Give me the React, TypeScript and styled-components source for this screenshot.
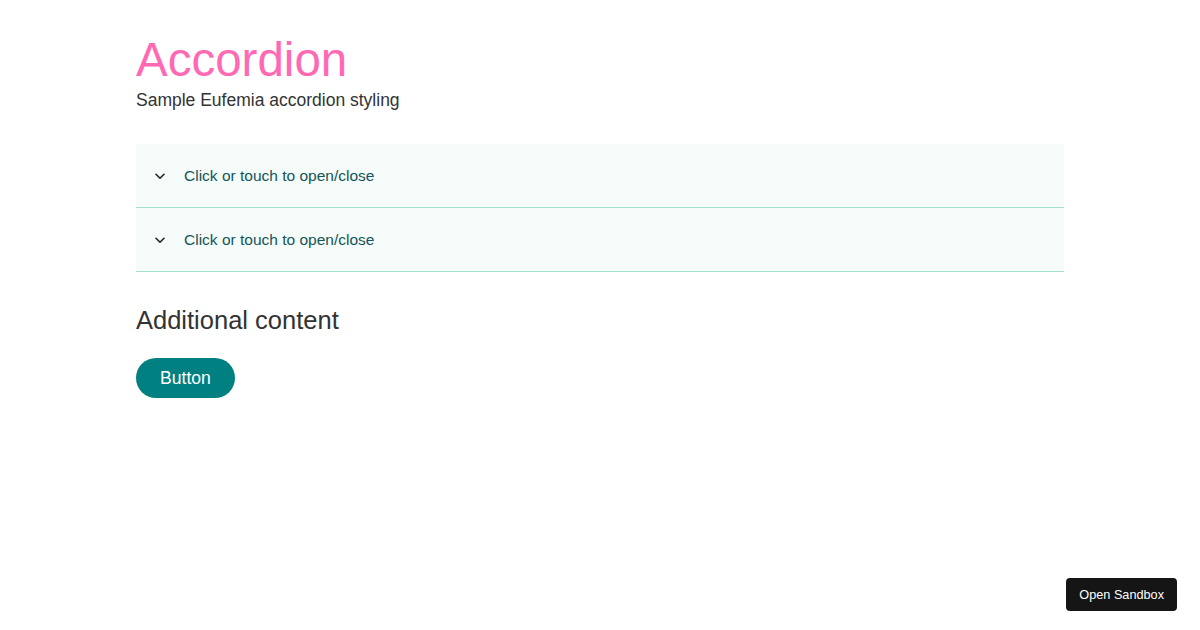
import styled, { createGlobalStyle } from 'styled-components';

const GlobalStyle = createGlobalStyle`
  html, body {
    margin: 0;
    padding: 0;
    background: #ffffff;
    font-family: 'Liberation Sans', Arial, Helvetica, sans-serif;
    color: #333333;
  }
`;

const ITEMS = ['Click or touch to open/close', 'Click or touch to open/close'];

function ChevronDown() {
  return (
    <svg width="16" height="16" viewBox="0 0 16 16" fill="none" aria-hidden="true">
      <path
        d="M4 6.25l4 4 4-4"
        stroke="#222"
        strokeWidth="1.6"
        strokeLinecap="round"
        strokeLinejoin="round"
      />
    </svg>
  );
}

export default function App(): JSX.Element {
  return (
    <>
      <GlobalStyle />
      <Page>
        <Title>Accordion</Title>
        <Lead>Sample Eufemia accordion styling</Lead>
        <AccordionGroup>
          {ITEMS.map((label, i) => (
            <AccordionHeader key={i} type="button">
              <IconWrap>
                <ChevronDown />
              </IconWrap>
              <HeaderLabel>{label}</HeaderLabel>
            </AccordionHeader>
          ))}
        </AccordionGroup>
        <SubHeading>Additional content</SubHeading>
        <PrimaryButton type="button">Button</PrimaryButton>
      </Page>
      <SandboxButton type="button">Open Sandbox</SandboxButton>
    </>
  );
}

const Page = styled.main`
  max-width: 928px;
  margin: 0 auto;
  padding-top: 32px;
  display: flex;
  flex-direction: column;
  align-items: flex-start;
`;

const Title = styled.h1`
  margin: 0;
  font-size: 47.5px;
  font-weight: 400;
  line-height: 56px;
  color: #ff69b4;
`;

const Lead = styled.p`
  margin: 0;
  font-size: 17.5px;
  line-height: 24px;
  color: #333333;
`;

const AccordionGroup = styled.div`
  width: 100%;
  margin-top: 32px;
  display: flex;
  flex-direction: column;
`;

const AccordionHeader = styled.button`
  display: flex;
  align-items: center;
  gap: 16px;
  width: 100%;
  height: 64px;
  padding: 0 0 0 16px;
  border: none;
  border-bottom: 1px solid #a5e1d2;
  background: #f4fbf9;
  cursor: pointer;
  font-family: inherit;
  text-align: left;
`;

const IconWrap = styled.span`
  display: flex;
  align-items: center;
  justify-content: center;
  width: 16px;
  height: 16px;
`;

const HeaderLabel = styled.span`
  font-size: 15.5px;
  line-height: 24px;
  color: #14555a;
`;

const SubHeading = styled.h2`
  margin: 32px 0 0;
  font-size: 25.5px;
  font-weight: 400;
  line-height: 32px;
  color: #333333;
`;

const PrimaryButton = styled.button`
  margin-top: 22px;
  height: 40px;
  padding: 0 24px;
  border: none;
  border-radius: 20px;
  background: #008080;
  color: #ffffff;
  font-family: inherit;
  font-size: 17.6px;
  cursor: pointer;
`;

const SandboxButton = styled.button`
  position: fixed;
  right: 23px;
  bottom: 19px;
  height: 33px;
  padding: 0 13px;
  border: none;
  border-radius: 4px;
  background: #151515;
  color: #ffffff;
  font-family: inherit;
  font-size: 12.7px;
  cursor: pointer;
`;
